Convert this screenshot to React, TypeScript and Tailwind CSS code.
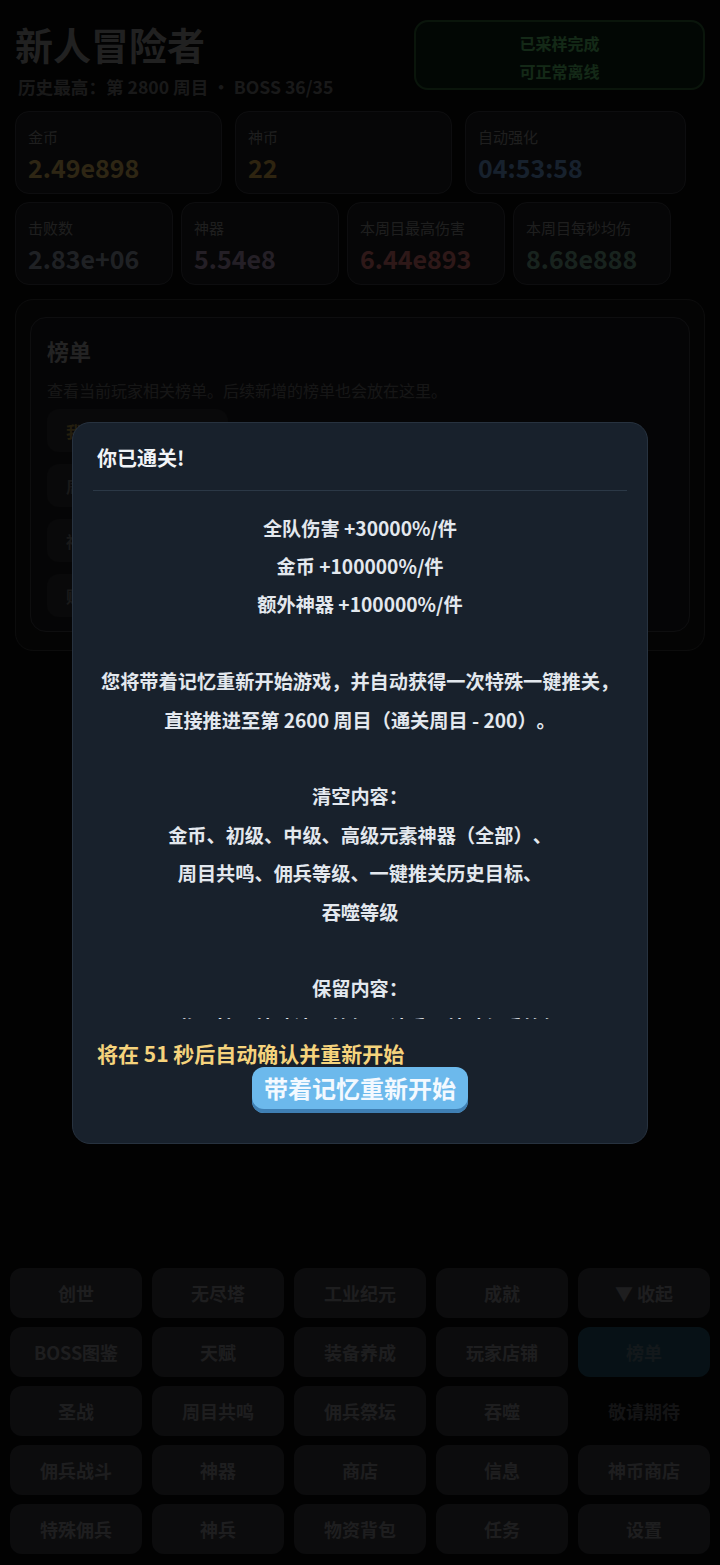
import React from 'react';

const FONT = "font-['Noto_Sans_CJK_SC','Noto_Sans',sans-serif]";

type Stat = { label: string; value: string; color: string; width: string };

const topStats: Stat[] = [
  { label: '金币', value: '2.49e898', color: 'text-[#fed16d]', width: 'w-[207px]' },
  { label: '神币', value: '22', color: 'text-[#fec85b]', width: 'w-[217px]' },
  { label: '自动强化', value: '04:53:58', color: 'text-[#80b6fa]', width: 'w-[221px]' },
];

const subStats: Stat[] = [
  { label: '击败数', value: '2.83e+06', color: 'text-[#adb6c8]', width: 'w-[158px]' },
  { label: '神器', value: '5.54e8', color: 'text-[#c8add1]', width: 'w-[158px]' },
  { label: '本周目最高伤害', value: '6.44e893', color: 'text-[#ff8888]', width: 'w-[158px]' },
  { label: '本周目每秒均伤', value: '8.68e888', color: 'text-[#88bfa4]', width: 'w-[158px]' },
];

const navItems = [
  '创世', '无尽塔', '工业纪元', '成就', '▼ 收起',
  'BOSS图鉴', '天赋', '装备养成', '玩家店铺', '榜单',
  '圣战', '周目共鸣', '佣兵祭坛', '吞噬', '敬请期待',
  '佣兵战斗', '神器', '商店', '信息', '神币商店',
  '特殊佣兵', '神兵', '物资背包', '任务', '设置',
];

const boards = ['我的伤害排行', '周目排行榜', '神器排行榜', '财富排行榜'];

const rewardText = `全队伤害 +30000%/件
金币 +100000%/件
额外神器 +100000%/件

您将带着记忆重新开始游戏，并自动获得一次特殊一键推关，
直接推进至第 2600 周目（通关周目 - 200）。

清空内容：
金币、初级、中级、高级元素神器（全部）、
周目共鸣、佣兵等级、一键推关历史目标、
吞噬等级

保留内容：
图鉴属性、特殊神器等级、神兵、特殊佣兵等级
成就、天赋、神币`;

function StatCard({ s }: { s: Stat }) {
  return (
    <div className={`${s.width} h-[83px] rounded-[14px] border border-[#4a4b52] bg-[#222328] px-3 pt-[13px]`}>
      <div className="text-[15px] leading-6 text-[#a6a6a6]">{s.label}</div>
      <div className={`mt-[2px] text-[25px] font-bold leading-8 ${s.color}`}>{s.value}</div>
    </div>
  );
}

function ClearModal() {
  return (
    <div className="fixed inset-0 z-10 flex items-center justify-center bg-black/[0.82]">
      <div className="flex w-[576px] flex-col rounded-[18px] border border-[#27323f] bg-[#18212c] px-5 pb-[30px] pt-[21px]">
        <div className="border-b border-[#2b3846] pb-[18px] pl-1 text-[20px] font-bold leading-7 text-[#f1f4f7]">
          你已通关!
        </div>
        <div className="h-[528px] overflow-y-auto pt-[18px] [scrollbar-width:none]">
          <p className="whitespace-pre-line text-center text-[19.2px] font-bold leading-[38.4px] text-[#e3e8ee] [text-spacing-trim:space-all]">
            {rewardText}
          </p>
        </div>
        <div className="mt-[20px] pl-1 text-[21px] font-bold leading-7 text-[#f5d37c]">
          将在 51 秒后自动确认并重新开始
        </div>
        <div className="flex justify-center">
          <button className="h-[46px] rounded-xl bg-[#6cb9ec] px-3 pb-[3px] text-[24px] font-bold leading-none text-[#f3f9ff] shadow-[inset_0_-4px_0_#3f7fb3]">
            带着记忆重新开始
          </button>
        </div>
      </div>
    </div>
  );
}

export default function App() {
  return (
    <div className={`${FONT} flex min-h-screen flex-col bg-[#0b0c10]`}>
      <div className="flex justify-between px-[15px] pt-[20px]">
        <div>
          <h1 className="text-[38px] font-bold leading-[48px] text-[#b4b4b4]">新人冒险者</h1>
          <div className="mt-[7px] pl-[3px] text-[17.6px] font-bold leading-6 text-[#8a8a8a]">
            历史最高：第 2800 周目 · BOSS 36/35
          </div>
        </div>
        <div className="flex h-[70px] w-[291px] flex-col items-center justify-center rounded-[14px] border-2 border-[#37773f] bg-[#10281a] pt-[3px] text-[16px] font-bold leading-7 text-[#6de47f]">
          <span>已采样完成</span>
          <span>可正常离线</span>
        </div>
      </div>

      <div className="mt-[12px] flex gap-[13px] px-[15px]">
        {topStats.map((s) => (
          <StatCard key={s.label} s={s} />
        ))}
      </div>
      <div className="mt-[8px] flex gap-[8px] px-[15px]">
        {subStats.map((s) => (
          <StatCard key={s.label} s={s} />
        ))}
      </div>

      <div className="mx-[15px] mt-[14px] rounded-[18px] border border-[#444] bg-[#1b1b1b] px-[14px] pb-[18px] pt-[17px]">
        <div className="rounded-[16px] border border-[#4d4d56] bg-[#1f1f24] px-4 pb-[14px] pt-[16px]">
          <h2 className="text-[22px] font-bold leading-8 text-[#c4c4c4]">榜单</h2>
          <p className="mt-[12px] text-[16px] leading-6 text-[#7c7c7c]">
            查看当前玩家相关榜单。后续新增的榜单也会放在这里。
          </p>
          <div className="mt-[7px] flex flex-col gap-3">
            {boards.map((b, i) => (
              <div
                key={b}
                className="flex h-[43px] w-[181px] items-center rounded-xl bg-[#323237] px-[19px] text-[16px] font-bold"
              >
                <span className={i === 0 ? 'text-[#c9a84f]' : 'text-[#8a8a8a]'}>{b}</span>
              </div>
            ))}
          </div>
        </div>
      </div>

      <nav className="mt-auto grid grid-cols-5 gap-x-[10px] gap-y-[9px] px-[10px] pb-[11px]">
        {navItems.map((item) => {
          const active = item === '榜单';
          const empty = item === '敬请期待';
          return (
            <div
              key={item}
              className={`flex h-[50px] items-center justify-center rounded-xl text-[18px] font-bold ${
                active
                  ? 'bg-[#28627a] text-[#6b8794]'
                  : empty
                    ? 'text-[#6f6f74]'
                    : 'bg-[#434348] text-[#a4a4ad]'
              }`}
            >
              {item}
            </div>
          );
        })}
      </nav>

      <ClearModal />
    </div>
  );
}
